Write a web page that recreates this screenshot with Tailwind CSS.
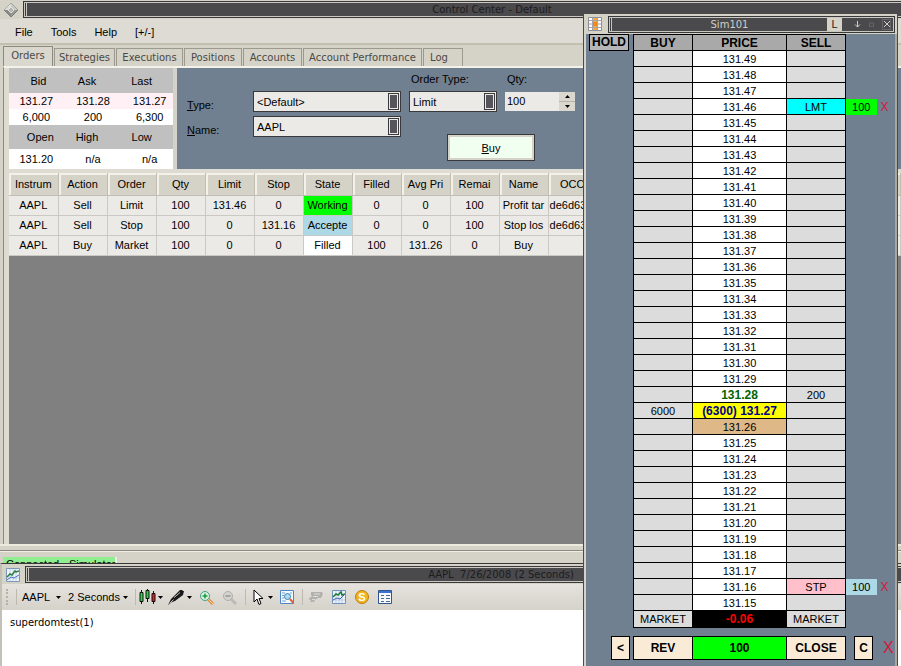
<!DOCTYPE html>
<html lang="en">

<head>
    <meta charset="UTF-8">
    <meta name="viewport" content="width=device-width, initial-scale=1.0">
    <title>Control Center - Default</title>
    <script src="https://cdn.jsdelivr.net/npm/@tailwindcss/browser@4"></script>
</head>

<body class="relative h-screen overflow-hidden bg-[#d5d2c8] font-['Liberation_Sans',Arial,sans-serif] text-[11px] leading-4 text-black">

    <!-- Control Center window -->
    <main class="absolute inset-0 flex flex-col bg-[#d5d2c8]">
        <header class="flex h-[19px] shrink-0 items-center gap-1 pl-[3px]">
            <svg viewBox="0 0 16 16" class="w-4 h-4" fill="none">
                <path d="M8 1l7 7-7 7-7-7z" fill="#9a9a98" stroke="#777" />
                <path d="M8 1l7 7H8z" fill="#c9c9c6" />
                <path d="M8 1L1 8h7z" fill="#dededb" />
                <path d="M8 15L1 8h7z" fill="#8a8a88" />
                <path d="M8 5l3 3-3 3-3-3z" fill="#b4b4b0" stroke="#dfdfdc" />
            </svg>
            <div class="flex h-[17px] flex-1 border-y border-l border-[#39383a] bg-[#c9c7c0] py-px pl-px">
                <div class="mr-px w-px bg-[#39383a]"></div>
                <h1 class="flex-1 bg-[#4a494c] pl-14 text-center font-['DejaVu_Sans',Verdana,sans-serif] text-[10px] leading-[14px] text-[#1d1c1e]">Control Center - Default</h1>
            </div>
        </header>

        <nav class="flex h-[26px] shrink-0 items-center gap-[18px] border-b-2 border-[#c3bfae] bg-[#dedbd4] pt-[2px] pl-[15px]">
            <button>File</button>
            <button>Tools</button>
            <button>Help</button>
            <button>[+/-]</button>
        </nav>

        <div class="flex min-h-0 flex-1 flex-col pt-px pl-[3px]">
            <div class="flex h-5 shrink-0 items-end gap-px font-['DejaVu_Sans',Verdana,sans-serif] text-[10px] text-[#4b4a45]" role="tablist">
                <button role="tab" class="h-5 w-[50px] border border-b-0 border-[#8d8a80] bg-[#dad7cf] pb-px">Orders</button>
                <button role="tab" class="h-[18px] w-[61px] border border-b-0 border-[#9c998e]">Strategies</button>
                <button role="tab" class="h-[18px] w-[67px] border border-b-0 border-[#9c998e]">Executions</button>
                <button role="tab" class="h-[18px] w-[58px] border border-b-0 border-[#9c998e]">Positions</button>
                <button role="tab" class="h-[18px] w-[59px] border border-b-0 border-[#9c998e]">Accounts</button>
                <button role="tab" class="h-[18px] w-[119px] border border-b-0 border-[#9c998e]">Account Performance</button>
                <button role="tab" class="h-[18px] w-[40px] border border-b-0 border-[#9c998e] pr-2">Log</button>
            </div>

            <section class="flex min-h-0 flex-1 flex-col border-t-2 border-l border-t-[#f3f1ea] border-l-[#8d8a80]">
                <div class="flex min-h-0 flex-1 flex-col border-l-[5px] border-[#dedbd2]">
                    <div class="flex h-[101px] shrink-0 gap-1">
                        <table class="w-[164px] table-fixed border-collapse bg-white text-center">
                            <tr class="h-[25px] bg-[#c0c0c0]">
                                <th class="p-0 pl-1 font-normal">Bid</th>
                                <th class="p-0 pr-2 font-normal">Ask</th>
                                <th class="p-0 pr-2 font-normal">Last</th>
                            </tr>
                            <tr class="h-4 bg-[#fff0f5]">
                                <td class="p-0">131.27</td>
                                <td class="p-0 pl-1">131.28</td>
                                <td class="p-0 pl-2">131.27</td>
                            </tr>
                            <tr class="h-4">
                                <td class="p-0">6,000</td>
                                <td class="p-0 pl-1">200</td>
                                <td class="p-0 pl-2">6,300</td>
                            </tr>
                            <tr class="h-6 bg-[#c0c0c0]">
                                <th class="p-0 pl-2 font-normal">Open</th>
                                <th class="p-0 pr-2 font-normal">High</th>
                                <th class="p-0 pr-2 font-normal">Low</th>
                            </tr>
                            <tr class="h-5">
                                <td class="p-0">131.20</td>
                                <td class="p-0 pl-1">n/a</td>
                                <td class="p-0 pl-2">n/a</td>
                            </tr>
                        </table>

                        <!-- order entry -->
                        <form class="flex flex-1 gap-2 bg-[#708090] pl-[10px]">
                            <div class="grid grid-cols-[66px_148px] content-start gap-y-[3px] pt-[23px]">
                                <label for="type" class="pt-1.5"><u>T</u>ype:</label>
                                <div class="flex h-[21px] border border-[#39383a] bg-[#ebeae7] p-px">
                                    <select id="type" class="min-w-0 flex-1 appearance-none px-[2px]">
                                        <option>&lt;Default&gt;</option>
                                    </select>
                                    <span class="w-[11px] border border-[#39383a] p-px"><i class="block h-full bg-[#55545a]"></i></span>
                                </div>
                                <label for="name" class="pt-1.5"><u>N</u>ame:</label>
                                <div class="flex h-[21px] border border-[#39383a] bg-[#ebeae7] p-px">
                                    <select id="name" class="min-w-0 flex-1 appearance-none px-[2px]">
                                        <option>AAPL</option>
                                    </select>
                                    <span class="w-[11px] border border-[#39383a] p-px"><i class="block h-full bg-[#55545a]"></i></span>
                                </div>
                            </div>
                            <div>
                                <div class="flex gap-2">
                                    <div class="w-[88px]">
                                        <label for="order-type" class="block h-[23px] pt-[3px] pl-[2px]">Order Type:</label>
                                        <div class="flex h-[21px] border border-[#39383a] bg-[#ebeae7] p-px">
                                            <select id="order-type" class="min-w-0 flex-1 appearance-none px-[2px]">
                                                <option>Limit</option>
                                            </select>
                                            <span class="w-[11px] border border-[#39383a] p-px"><i class="block h-full bg-[#55545a]"></i></span>
                                        </div>
                                    </div>
                                    <div class="w-[70px]">
                                        <label for="qty" class="block h-[24px] pt-[3px] pl-[2px]">Qty:</label>
                                        <div class="flex h-[19px] bg-[#ebeae7]">
                                            <input id="qty" type="text" value="100" class="min-w-0 flex-1 px-[2px] pb-[2px]">
                                            <div class="flex w-4 flex-col gap-px bg-[#b5b2a8]">
                                                <button type="button" aria-label="More" class="flex flex-1 items-center justify-center bg-[#dad7cf]"><svg viewBox="0 0 5 3" class="h-[3px] w-[5px]"><path d="M0 3h5L2.500 0z" /></svg></button>
                                                <button type="button" aria-label="Less" class="flex flex-1 items-center justify-center bg-[#dad7cf]"><svg viewBox="0 0 5 3" class="h-[3px] w-[5px]"><path d="M0 0h5L2.500 3z" /></svg></button>
                                            </div>
                                        </div>
                                    </div>
                                </div>
                                <button type="button" class="mt-[22px] ml-[38px] h-[27px] w-[88px] border border-[#39383a] bg-[#d5d2c8] p-[2px]">
                                    <span class="flex h-full items-center justify-center bg-[#f0fff0]"><u>B</u>uy</span>
                                </button>
                            </div>
                        </form>
                    </div>

                    <!-- orders grid -->
                    <div class="min-h-0 flex-1 border-t-4 border-[#dedbd2] bg-[#808080]">
                        <table class="w-full table-fixed border-collapse bg-[#ebeae7] text-center">
                            <colgroup>
                                <col span="12" class="w-[49px]">
                                <col>
                            </colgroup>
                            <thead id="orders-head"></thead>
                            <tbody id="orders-body"></tbody>
                        </table>
                    </div>
                </div>
            </section>
        </div>

        <div class="h-[7px] shrink-0 border-t-2 border-b border-t-[#ece9dd] border-b-[#8d8a80]"></div>
        <footer class="h-[115px] shrink-0 border-t border-[#f0eee6] pt-[5px] pl-[3px]">
            <div class="h-4 w-[114px] border-r-2 border-[#f0eee6] bg-[#90ee90] pl-[3px] leading-[14px] whitespace-nowrap">Connected - Simulator</div>
        </footer>
    </main>

    <!-- chart window -->
    <section class="absolute inset-x-0 top-[563px] bottom-0 flex flex-col border-t border-l-2 border-t-[#39383a] border-l-[#c3c0b6] bg-[#d5d2c8]">
        <header class="flex h-5 shrink-0 items-center gap-[5px] pt-px pl-1">
            <svg viewBox="0 0 14 14" class="h-[14px] w-[14px]" fill="none">
                <path d="M.5.5h13v13H.5z" fill="#eef4fb" stroke="#7d98b8" />
                <path d="M4 1v12M7 1v12M10 1v12M1 10h12" stroke="#c3d2e6" />
                <path d="M1 9l3-3 2 1 3-4 1 1 3-1" stroke="#2f7d46" stroke-width="1.500" />
                <path d="M1 12l4-3 3 1 5-3" stroke="#4a78b8" />
            </svg>
            <div class="flex h-[17px] flex-1 border-y border-l border-[#39383a] bg-[#c9c7c0] py-px pl-px">
                <div class="mr-px w-px bg-[#39383a]"></div>
                <h2 class="flex-1 bg-[#4a494c] pl-[72px] text-center whitespace-pre font-['DejaVu_Sans',Verdana,sans-serif] text-[10px] leading-[14px] text-[#1d1c1e]">AAPL  7/26/2008 (2 Seconds)</h2>
            </div>
        </header>
        <div class="flex h-[26px] shrink-0 items-center bg-linear-to-b from-[#e6e3df] to-[#d5d2ca] pl-1">
            <i class="h-4 w-[2px] border-l-2 border-dotted border-[#b5b2a8]"></i>
            <i class="ml-2 h-4 w-px bg-[#bdbab0]"></i>
            <button class="ml-[5px] flex w-[39px] items-center justify-between">AAPL
                <svg viewBox="0 0 5 3" class="h-[3px] w-[5px]"><path d="M0 0h5L2.500 3z" /></svg>
            </button>
            <button class="ml-[7px] flex w-[60px] items-center justify-between whitespace-nowrap">2 Seconds
                <svg viewBox="0 0 5 3" class="h-[3px] w-[5px]"><path d="M0 0h5L2.500 3z" /></svg>
            </button>
            <i class="ml-[7px] h-4 w-px bg-[#bdbab0]"></i>
            <button aria-label="Chart style" class="ml-[3px] flex w-6 items-center justify-between">
                <svg viewBox="0 0 17 16" class="h-4 w-[17px]" stroke="#111">
                    <path d="M2.500 1v14M8.500 0v13M14.500 2v13" />
                    <path d="M1 3.500h3v9H1zM7 1.500h3v8H7z" fill="#2fd04a" />
                    <path d="M13 4.500h3v8h-3z" fill="#d3202e" />
                </svg>
                <svg viewBox="0 0 5 3" class="h-[3px] w-[5px]"><path d="M0 0h5L2.500 3z" /></svg>
            </button>
            <button aria-label="Drawing tools" class="ml-[5px] flex w-6 items-center justify-between">
                <svg viewBox="0 0 17 16" class="h-4 w-[17px]">
                    <path d="M0 16l3-6 7-7 2-2 2 0 1 1 1 0-1 4-8 6-3 1z" fill="#1a1a1a" />
                    <path d="M6 8.500l6-5M1.500 14.500l4-4" stroke="#bbb" />
                </svg>
                <svg viewBox="0 0 5 3" class="h-[3px] w-[5px]"><path d="M0 0h5L2.500 3z" /></svg>
            </button>
            <button aria-label="Zoom in" class="ml-[7px]">
                <svg viewBox="0 0 15 15" class="h-[15px] w-[15px]" fill="none">
                    <path d="M9 9l5 5" stroke="#e08a3c" stroke-width="3" />
                    <path d="M9 9l5 5" stroke="#fbd9a8" />
                    <circle cx="6" cy="6" r="4.500" fill="#d8f3e4" stroke="#4b9a86" />
                    <path d="M6 3.500v5M3.500 6h5" stroke="#1e9a3c" stroke-width="1.500" />
                </svg>
            </button>
            <button aria-label="Zoom out" class="ml-2" disabled>
                <svg viewBox="0 0 15 15" class="h-[15px] w-[15px]" fill="none">
                    <path d="M9 9l5 5" stroke="#bcbab5" stroke-width="3" />
                    <circle cx="6" cy="6" r="4.500" fill="#d4d2cd" stroke="#b0aeaa" />
                    <path d="M3.500 6h5" stroke="#96948f" stroke-width="1.500" />
                </svg>
            </button>
            <i class="ml-2 h-4 w-px bg-[#bdbab0]"></i>
            <button aria-label="Cursor" class="ml-[7px] flex w-5 items-center justify-between">
                <svg viewBox="0 0 11 17" class="h-[17px] w-[11px]">
                    <path d="M1 1v12l3-3 2 5.500 2-1L6 9.500h4z" fill="#fff" stroke="#000" />
                </svg>
                <svg viewBox="0 0 5 3" class="h-[3px] w-[5px]"><path d="M0 0h5L2.500 3z" /></svg>
            </button>
            <button aria-label="Data box" class="ml-[7px]">
                <svg viewBox="0 0 14 14" class="h-[14px] w-[14px]" fill="none">
                    <path d="M.5.5h13v13H.5z" fill="#f4f9ff" stroke="#4f86c6" />
                    <path d="M2 3h3M2 5.500h2M2 8h2M2 11h4M10 3h2" stroke="#6ea0d8" />
                    <circle cx="7.500" cy="6.500" r="3" fill="#a9dcf2" stroke="#3f84b5" />
                    <path d="M10 9l3.500 4" stroke="#e0603c" stroke-width="2" />
                </svg>
            </button>
            <i class="ml-2 h-4 w-px bg-[#bdbab0]"></i>
            <button aria-label="Format" class="ml-[6px]" disabled>
                <svg viewBox="0 0 14 14" class="h-[14px] w-[14px]">
                    <path d="M2 2h11l1 2-2 4H9l-3 2-1 2H1l1-2H0l1-3h2l-1-2z" fill="#b3b1ac" />
                    <path d="M5 4h6M4 6.500h5M3 9.500h3" stroke="#dedcd8" />
                </svg>
            </button>
            <button aria-label="Indicators" class="ml-[9px]">
                <svg viewBox="0 0 14 14" class="h-[14px] w-[14px]" fill="none">
                    <path d="M.5.5h13v13H.5z" fill="#eef4fb" stroke="#6f92bd" />
                    <path d="M4 1v12M7 1v12M10 1v12M1 10h12" stroke="#b9cbe4" />
                    <path d="M1 7l3-3 2 1 3-3 1 3 3-1" stroke="#1f7a38" stroke-width="1.500" />
                    <path d="M1 10l4-2 3 1 5-5" stroke="#3c64b0" />
                </svg>
            </button>
            <button aria-label="Strategies" class="ml-[9px] flex h-[14px] w-[14px] items-center justify-center rounded-full border border-[#b87d10] bg-[#f3b51c] text-[11px] leading-3 font-bold text-white">S</button>
            <button aria-label="Properties" class="ml-[9px]">
                <svg viewBox="0 0 14 14" class="h-[14px] w-[14px]" fill="none">
                    <path d="M.5.5h13v13H.5z" fill="#f6faff" stroke="#31568f" />
                    <path d="M1 1h12v2H1z" fill="#3e72d0" />
                    <path d="M3 5.500h3M3 8.500h3M3 11.500h3M8 5.500h4M8 8.500h4M8 11.500h4" stroke="#4a6a8f" />
                </svg>
            </button>
        </div>
        <div class="flex-1 bg-white pt-1 pl-2 font-['DejaVu_Sans',Verdana,sans-serif] text-[10px] leading-[18px]">superdomtest(1)</div>
    </section>

    <!-- SuperDOM window -->
    <aside class="absolute top-[13px] right-[3px] bottom-0 left-[583px] flex flex-col border-x border-t border-[#4a494c] bg-[#708090] shadow-[inset_2px_0_0_#d5d2c8,inset_-2px_0_0_#a9a69c]">
        <header class="flex h-5 shrink-0 items-center gap-[6px] bg-[#d5d2c8] pr-[2px] pl-1">
            <svg viewBox="0 0 14 14" class="h-[14px] w-[14px]" fill="none">
                <path d="M.5.5h13v13H.5z" fill="#fff" stroke="#8f8f9a" />
                <path d="M5 1h4v12H5z" fill="#f7a945" />
                <path d="M1 3.500h12M1 7h12M1 10.500h12M4.500 1v12M9.500 1v12" stroke="#a3a3b0" />
                <path d="M5 5h4v4H5z" fill="#f08a1c" />
            </svg>
            <div class="flex h-[17px] flex-1 border border-[#39383a] bg-[#c9c7c0] p-px">
                <div class="mr-px w-px bg-[#39383a]"></div>
                <div class="flex flex-1 items-center bg-[#4a494c] text-[#d0cec8]">
                    <h2 class="flex-1 pl-5 text-center font-['DejaVu_Sans',Verdana,sans-serif] text-[10px] leading-[13px]">Sim101</h2>
                    <button class="h-[13px] w-[15px] bg-[#d5d2c8] leading-[13px] text-[#222]">L</button>
                    <div class="flex w-[51px] items-center justify-between pr-[2px] pl-3">
                        <button aria-label="Minimize"><svg viewBox="0 0 7 7" class="h-[7px] w-[7px]" stroke="#d0cec8" fill="none"><path d="M3.500 0v6M1 3.500L3.500 6 6 3.500" /></svg></button>
                        <button aria-label="Maximize"><svg viewBox="0 0 5 5" class="h-[5px] w-[5px]" stroke="#66646a" fill="none"><path d="M.5 1h4v3.500h-4z" /></svg></button>
                        <button aria-label="Close" class="flex h-[11px] w-[9px] items-center justify-center border border-[#66646a]"><svg viewBox="0 0 6 6" class="h-[6px] w-[6px]" stroke="#d0cec8"><path d="M0 0l6 6M6 0L0 6" /></svg></button>
                    </div>
                </div>
            </div>
        </header>
        <div class="flex pl-[5px]">
            <button class="mr-[4px] h-[17px] w-[40px] shrink-0 border border-black bg-[#b4b6b8] text-[12px] leading-[15px] font-bold">HOLD</button>
            <table class="w-[259px] table-fixed border-collapse text-center leading-[14px]">
                <colgroup>
                    <col class="w-[59px]">
                    <col class="w-[94px]">
                    <col class="w-[59px]">
                    <col class="w-[31px]">
                    <col class="w-[16px]">
                </colgroup>
                <thead>
                    <tr class="h-4 text-[12px]">
                        <th class="border border-black bg-[#a9a9a9] p-0">BUY</th>
                        <th class="border border-black bg-[#a9a9a9] p-0">PRICE</th>
                        <th class="border border-black bg-[#a9a9a9] p-0">SELL</th>
                        <td colspan="2"></td>
                    </tr>
                </thead>
                <tbody id="ladder"></tbody>
                <tfoot>
                    <tr class="h-[17px]">
                        <td class="border border-black bg-[#dcdcdc] p-0">MARKET</td>
                        <td class="border border-black bg-black p-0 text-[12px] font-bold text-[#f00]">-0.06</td>
                        <td class="border border-black bg-[#dcdcdc] p-0">MARKET</td>
                        <td colspan="2"></td>
                    </tr>
                </tfoot>
            </table>
        </div>
        <div class="mt-2 flex h-6 items-stretch pl-[27px] text-[12px] font-bold">
            <button class="w-[19px] border border-black bg-[#faebd7]">&lt;</button>
            <button class="ml-[3px] w-[60px] border border-black bg-[#faebd7]">REV</button>
            <div class="flex w-[93px] items-center justify-center border-y border-black bg-[#0f0]">100</div>
            <button class="w-[60px] border border-black bg-[#faebd7]">CLOSE</button>
            <button class="ml-2 w-[19px] border border-black bg-[#faebd7]">C</button>
            <button class="ml-[10px] text-[16px] font-normal text-[#dc143c]">X</button>
        </div>
    </aside>

    <script>
        var columns = ["Instrum", "Action", "Order", "Qty", "Limit", "Stop", "State", "Filled", "Avg Pri", "Remai", "Name", "OCO", ""];
        var orders = [
            ["AAPL", "Sell", "Limit", "100", "131.46", "0", "Working", "0", "0", "100", "Profit tar", "de6d63bf", ""],
            ["AAPL", "Sell", "Stop", "100", "0", "131.16", "Accepte", "0", "0", "100", "Stop los", "de6d63bf", ""],
            ["AAPL", "Buy", "Market", "100", "0", "0", "Filled", "100", "131.26", "0", "Buy", "", ""]
        ];
        var stateColors = { Working: "bg-[#0f0]", Accepte: "bg-[#add8e6]", Filled: "bg-white" };

        document.getElementById("orders-head").innerHTML = '<tr class="h-[22px]">' + columns.map(function (name) {
            return '<th class="overflow-hidden border-r border-b border-[#c0bdb3] bg-[#d5d2c8] p-0 font-normal whitespace-nowrap shadow-[inset_2px_2px_0_#f3f1ea]">' + name + '</th>';
        }).join("") + '</tr>';

        document.getElementById("orders-body").innerHTML = orders.map(function (order) {
            return '<tr class="h-5">' + order.map(function (value, i) {
                var color = i == 6 ? stateColors[value] : "";
                return '<td class="overflow-hidden border-r border-b border-[#cbc9c3] p-0 whitespace-nowrap ' + color + '">' + value + '</td>';
            }).join("") + '</tr>';
        }).join("");

        // price ladder, one row per cent from 131.49 down to 131.15
        var special = {
            13146: { sell: "LMT", sellColor: "bg-[#0ff]", qty: "100", qtyColor: "bg-[#0f0]" },
            13128: { sell: "200", priceStyle: "bg-white text-[12px] font-bold text-[#006400]" },
            13127: { buy: "6000", price: "(6300) 131.27", priceStyle: "bg-[#ff0] text-[12px] font-bold text-[#00008b]" },
            13126: { priceStyle: "bg-[#deb887]" },
            13116: { sell: "STP", sellColor: "bg-[#ffc0cb]", qty: "100", qtyColor: "bg-[#add8e6]" }
        };
        var rows = "";
        for (var cents = 13149; cents >= 13115; cents--) {
            var row = special[cents] || {};
            rows += '<tr class="h-4">' +
                '<td class="border border-black bg-[#dcdcdc] p-0">' + (row.buy || "") + '</td>' +
                '<td class="border border-black p-0 ' + (row.priceStyle || "bg-white") + '">' + (row.price || (cents / 100).toFixed(2)) + '</td>' +
                '<td class="border border-black p-0 ' + (row.sellColor || "bg-[#dcdcdc]") + '">' + (row.sell || "") + '</td>' +
                '<td class="p-0 ' + (row.qtyColor || "") + '">' + (row.qty || "") + '</td>' +
                '<td class="p-0 text-[12px] text-[#dc143c]">' + (row.qty ? '<button class="block w-full">X</button>' : "") + '</td>' +
                '</tr>';
        }
        document.getElementById("ladder").innerHTML = rows;
    </script>
</body>

</html>
